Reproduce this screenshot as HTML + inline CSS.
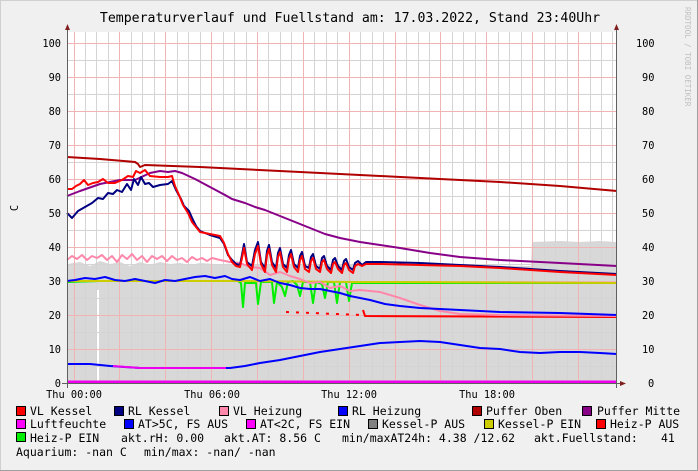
<!DOCTYPE html>
<html><head><meta charset="utf-8"><style>
html,body{margin:0;padding:0;background:#f0f0f0}
svg{display:block}
text{font-family:"DejaVu Sans Mono","Liberation Mono",monospace;fill:#000}
.l{font-size:10.3px}
.g{font-size:11.5px}
</style></head><body>
<svg width="698" height="471" viewBox="0 0 698 471" xmlns="http://www.w3.org/2000/svg">
<rect x="0" y="0" width="698" height="471" fill="#f0f0f0"/>
<rect x="0.5" y="0.5" width="697" height="470" fill="none" stroke="#d0d0d0"/>
<line x1="697.5" y1="0" x2="697.5" y2="471" stroke="#a0a0a0"/>
<line x1="0" y1="470.5" x2="698" y2="470.5" stroke="#a0a0a0"/>
<text x="350" y="22" text-anchor="middle" style="font-size:13.2px">Temperaturverlauf und Fuellstand am: 17.03.2022, Stand 23:40Uhr</text>
<text transform="translate(685,7) rotate(90)" style="font-size:7.5px;fill:#c0c0c0">RRDTOOL / TOBI OETIKER</text>
<rect x="67" y="32" width="550" height="351" fill="#fff"/>
<polygon fill="#d8d8d8" points="67,383 67,264 80,262 90,266 100,261 110,264 120,262 130,266 140,262 150,265 160,262 170,264 180,263 190,265 200,263 215,264 230,265 260,265 300,264 360,264 400,265 450,265 531,266 532,242 560,241 580,242 600,241 617,242 617,383"/>
<rect x="97" y="290" width="2" height="93" fill="#fff"/>
<path stroke="#d4d4d4" stroke-width="1" fill="none" d="M85.5 32V383M96.5 32V383M108.5 32V383M131.5 32V383M142.5 32V383M154.5 32V383M177.5 32V383M188.5 32V383M200.5 32V383M223.5 32V383M234.5 32V383M246.5 32V383M268.5 32V383M280.5 32V383M291.5 32V383M314.5 32V383M326.5 32V383M337.5 32V383M360.5 32V383M372.5 32V383M383.5 32V383M406.5 32V383M418.5 32V383M429.5 32V383M452.5 32V383M463.5 32V383M475.5 32V383M498.5 32V383M509.5 32V383M521.5 32V383M544.5 32V383M555.5 32V383M567.5 32V383M590.5 32V383M601.5 32V383M612.5 32V383
M67 366.5H617M67 332.5H617M67 298.5H617M67 264.5H617M67 230.5H617M67 196.5H617M67 162.5H617M67 128.5H617M67 94.5H617M67 60.5H617"/>
<path stroke="#f0b4b4" stroke-width="1" fill="none" d="M74.5 32V383M119.5 32V383M165.5 32V383M211.5 32V383M257.5 32V383M303.5 32V383M349.5 32V383M395.5 32V383M440.5 32V383M486.5 32V383M532.5 32V383M578.5 32V383
M67 349.5H617M67 315.5H617M67 281.5H617M67 247.5H617M67 213.5H617M67 179.5H617M67 145.5H617M67 111.5H617M67 77.5H617M67 43.5H617"/>
<g fill="none" stroke-width="2" stroke-linejoin="round">
<polyline stroke="#00ee00" points="67,282 100,281 200,281 238,281 241,283 243,307 245,283 256,283 258,304 261,282 272,282 274,303 277,282 282,287 285,296 288,282 293,281 297,285 300,296 303,282 310,282 313,303 316,282 322,284 325,298 328,282 334,282 337,303 340,282 346,282 349,301 352,283 617,283"/>
<polyline stroke="#cccc00" points="67,281 238,281 355,282 400,282 617,283"/>
<polyline stroke="#ff0000" points="363,310 365,316 617,317"/>
<polyline stroke="#ff0000" stroke-dasharray="3 7" points="286,312 362,315"/>
<polyline stroke="#ff88aa" points="67,260 72,256 77,259 82,255 87,260 92,256 97,258 102,255 107,260 112,256 117,262 122,255 127,259 132,254 137,260 142,256 147,262 152,256 157,259 162,256 167,261 172,256 177,260 182,258 187,262 192,257 197,260 202,258 207,261 212,258 220,260 230,262 240,263 250,267 260,268 270,275 280,272 290,276 300,279 310,283 320,282 330,288 340,286 350,291 360,290 380,292 400,298 420,305 440,311 460,314 500,315 617,316"/>
<polyline stroke="#0000ff" points="67,281 75,280 85,278 95,279 105,277 115,280 125,281 135,279 145,281 155,283 165,280 175,281 185,279 195,277 205,276 215,278 225,276 232,279 240,280 250,277 260,281 270,279 280,283 290,285 300,288 310,289 320,289 330,291 340,293 350,296 360,298 370,300 385,304 400,306 420,308 460,310 500,312 560,313 617,315"/>
<polyline stroke="#0000ff" points="67,364 90,364 110,366 140,368 200,368 230,368 245,366 260,363 280,360 300,356 320,352 340,349 360,346 380,343 400,342 420,341 440,342 460,345 480,348 500,349 520,352 540,353 560,352 580,352 600,353 617,354"/>
<polyline stroke="#ee00ee" points="113,366 140,368 200,368 226,368"/>
<line x1="67" y1="382" x2="617" y2="382" stroke="#ee00ee" stroke-width="3"/>
<polyline stroke="#880088" points="67,196 80,191 100,184 120,180 135,180 150,173 160,171 168,172 175,171 182,173 195,179 210,187 225,195 232,199 245,203 255,207 265,210 280,216 295,222 310,228 325,234 340,238 360,242 380,245 400,248 430,253 460,257 500,260 560,263 617,266"/>
<polyline stroke="#b00000" points="67,157 100,159 135,162 138,164 140,167 145,165 200,167 240,169 300,172 380,176 440,179 500,182 560,186 617,191"/>
<polyline stroke="#000080" points="67,213 72,218 78,211 85,207 92,203 98,198 103,199 108,193 113,194 117,190 122,192 127,184 131,190 134,179 138,185 141,177 145,184 149,183 153,187 160,185 168,184 172,181 176,190 181,199 184,206 189,211 193,220 196,226 200,231 210,235 220,238 224,244 228,255 232,260 236,264 240,265 242,255 244,244 247,262 252,266 255,250 258,242 261,262 265,268 267,251 269,245 272,262 276,268 278,253 280,248 283,264 287,268 289,255 291,250 294,264 298,268 300,256 302,252 305,266 309,268 311,257 313,254 316,266 320,269 322,258 324,256 327,266 331,270 333,260 335,258 338,266 342,270 344,261 346,259 349,267 353,270 355,263 358,261 362,265 366,262 380,262 420,263 460,265 500,267 560,271 617,274"/>
<polyline stroke="#ff0000" points="67,189 72,189 76,186 80,184 84,180 88,185 93,183 98,182 103,179 108,183 115,183 122,180 128,176 133,177 136,171 140,173 145,170 150,176 160,177 168,177 172,176 175,186 179,195 183,205 188,213 192,222 196,227 200,232 210,234 220,236 224,243 228,254 232,262 236,266 240,267 242,258 244,248 247,264 252,270 255,254 258,246 261,264 265,272 267,255 269,249 272,265 276,272 278,257 280,252 283,267 287,272 289,259 291,254 294,267 298,272 300,260 302,256 305,269 309,272 311,261 313,258 316,269 320,272 322,262 324,260 327,269 331,273 333,264 335,262 338,269 342,273 344,265 346,263 349,270 353,273 355,266 358,264 362,266 366,264 380,264 420,265 460,266 500,268 560,272 617,275"/>
</g>
<line x1="67.5" y1="30" x2="67.5" y2="388" stroke="#606060"/>
<line x1="616.5" y1="30" x2="616.5" y2="388" stroke="#606060"/>
<line x1="62" y1="383.5" x2="621" y2="383.5" stroke="#606060"/>
<polygon points="67.5,24 65,30 70,30" fill="#802020"/>
<polygon points="616.5,24 614,30 619,30" fill="#802020"/>
<polygon points="626,383.5 620,381 620,386" fill="#802020"/>
<g class="l" text-anchor="end">
<text x="61" y="47">100</text><text x="61" y="81">90</text><text x="61" y="115">80</text><text x="61" y="149">70</text><text x="61" y="183">60</text><text x="61" y="217">50</text><text x="61" y="251">40</text><text x="61" y="285">30</text><text x="61" y="319">20</text><text x="61" y="353">10</text><text x="61" y="387">0</text>
</g>
<g class="l" text-anchor="start">
<text x="636" y="47">100</text><text x="642" y="81">90</text><text x="642" y="115">80</text><text x="642" y="149">70</text><text x="642" y="183">60</text><text x="642" y="217">50</text><text x="642" y="251">40</text><text x="642" y="285">30</text><text x="642" y="319">20</text><text x="642" y="353">10</text><text x="648" y="387">0</text>
</g>
<text transform="translate(18,208) rotate(-90)" class="l" text-anchor="middle">C</text>
<g class="l" text-anchor="middle">
<text x="74" y="398">Thu 00:00</text><text x="212" y="398">Thu 06:00</text><text x="349" y="398">Thu 12:00</text><text x="487" y="398">Thu 18:00</text>
</g>
<g stroke="#000" stroke-width="1">
<rect x="16.5" y="406.5" width="9" height="9" fill="#ff0000"/>
<rect x="114.5" y="406.5" width="9" height="9" fill="#000080"/>
<rect x="219.5" y="406.5" width="9" height="9" fill="#ff88aa"/>
<rect x="338.5" y="406.5" width="9" height="9" fill="#0000ff"/>
<rect x="472.5" y="406.5" width="9" height="9" fill="#b00000"/>
<rect x="582.5" y="406.5" width="9" height="9" fill="#880088"/>
<rect x="16.5" y="419.5" width="9" height="9" fill="#ff00ff"/>
<rect x="124.5" y="419.5" width="9" height="9" fill="#0000ff"/>
<rect x="246.5" y="419.5" width="9" height="9" fill="#ff00ff"/>
<rect x="368.5" y="419.5" width="9" height="9" fill="#808080"/>
<rect x="484.5" y="419.5" width="9" height="9" fill="#cccc00"/>
<rect x="596.5" y="419.5" width="9" height="9" fill="#ff0000"/>
<rect x="16.5" y="432.5" width="9" height="9" fill="#00ee00"/>
</g>
<g class="g">
<text x="30" y="415">VL Kessel</text><text x="128" y="415">RL Kessel</text><text x="233" y="415">VL Heizung</text><text x="352" y="415">RL Heizung</text><text x="486" y="415">Puffer Oben</text><text x="597" y="415">Puffer Mitte</text>
<text x="30" y="428">Luftfeuchte</text><text x="138" y="428">AT&gt;5C, FS AUS</text><text x="260" y="428">AT&lt;2C, FS EIN</text><text x="382" y="428">Kessel-P AUS</text><text x="498" y="428">Kessel-P EIN</text><text x="610" y="428">Heiz-P AUS</text>
<text x="30" y="442">Heiz-P EIN</text><text x="121" y="442">akt.rH: 0.00</text><text x="224" y="442">akt.AT: 8.56 C</text><text x="342" y="442">min/maxAT24h: 4.38 /12.62</text><text x="534" y="442">akt.Fuellstand:</text><text x="661" y="442">41</text>
<text x="16" y="456">Aquarium: -nan C</text><text x="144" y="456">min/max: -nan/ -nan</text>
</g>
</svg>
</body></html>
